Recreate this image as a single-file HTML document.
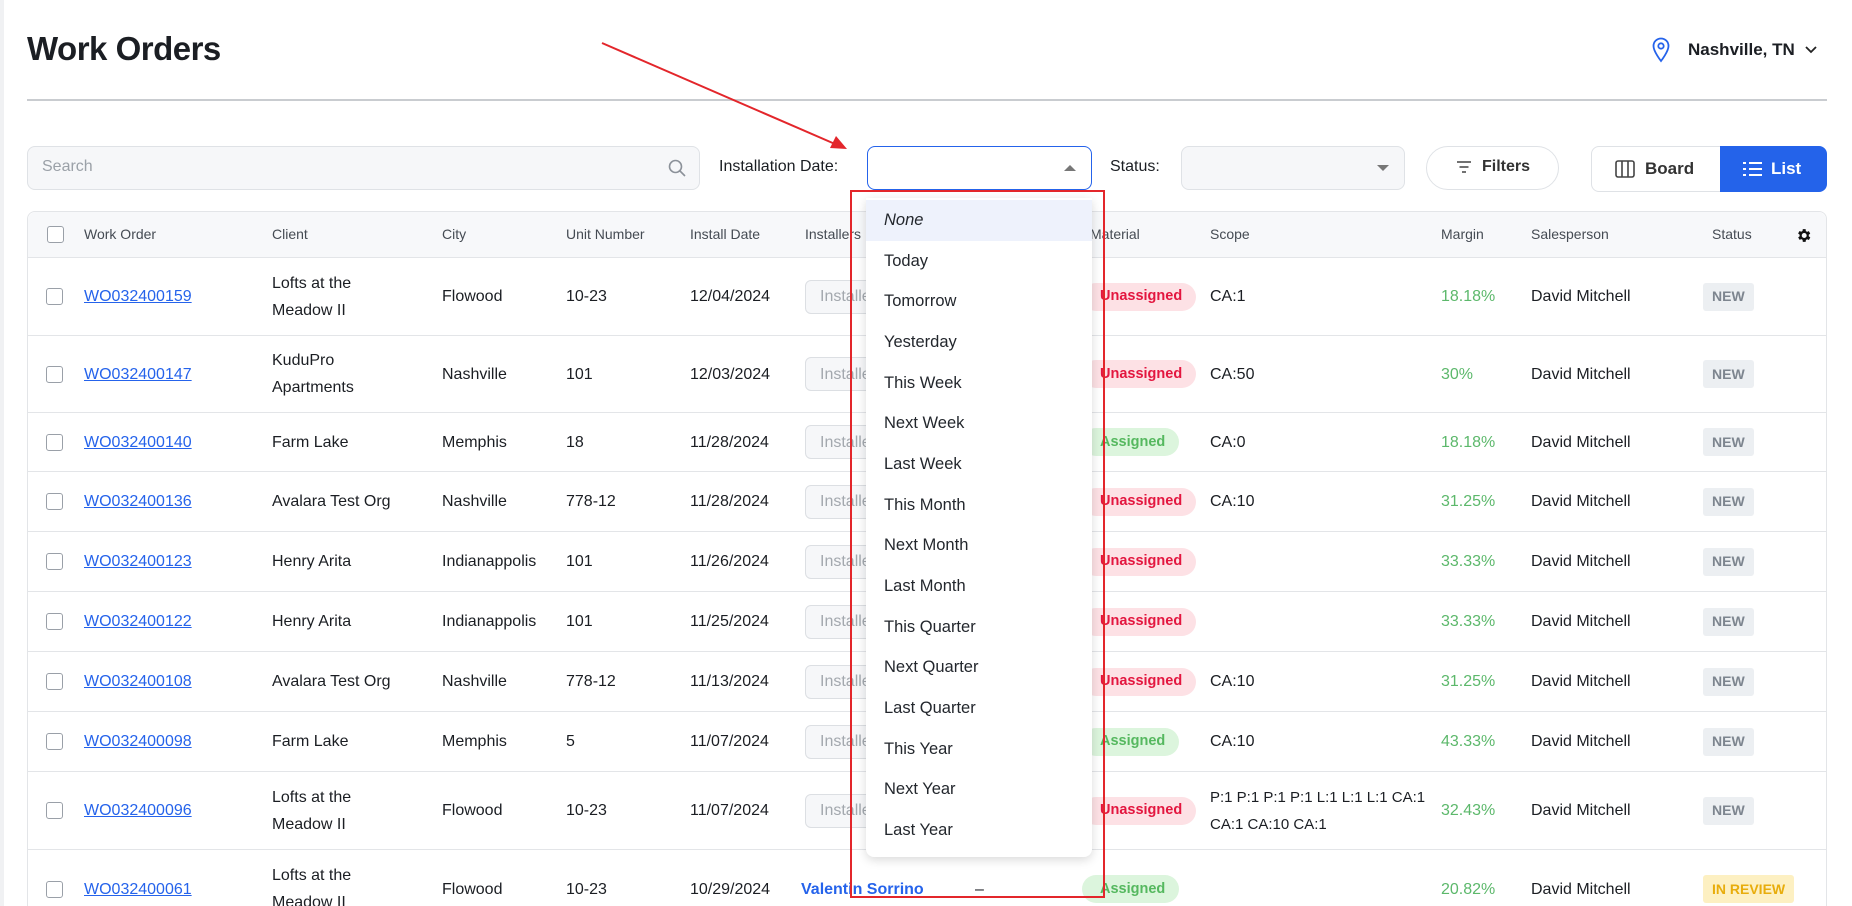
<!DOCTYPE html>
<html><head><meta charset="utf-8"><style>
*{box-sizing:border-box;margin:0;padding:0}
html,body{width:1852px;height:906px;overflow:hidden}
body{background:#fff;font-family:"Liberation Sans",sans-serif;color:#1b1e23;position:relative}
.a{position:absolute}
h1{position:absolute;left:27px;top:30px;font-size:33px;font-weight:700;letter-spacing:-0.5px}
.row{position:absolute;left:27px;width:1800px;border-bottom:1px solid #e3e5e8}
.c{position:absolute;top:0;height:100%;display:flex;align-items:center;font-size:16px;line-height:27px;white-space:nowrap}
.cb{width:17px;height:17px;border:1.5px solid #9aa0a8;border-radius:3px;background:#fff}
.lnk{color:#2563eb;text-decoration:underline}
.inp{width:130px;height:34px;border:1px solid #dcdfe3;border-radius:6px;background:#f6f7f9;color:#a3a8ae;padding-left:14px;display:flex;align-items:center;font-size:16px}
.bd{height:28px;border-radius:14px;padding:0 14px 0 18px;display:flex;align-items:center;font-size:14.5px;font-weight:700}
.un{background:#fde1e5;color:#e3163f}
.as{background:#dcf5dd;color:#55b85f}
.mg{color:#5cb86b}
.nw{background:#eceff2;color:#7d858f;font-size:14px;font-weight:700;height:28px;padding:0 9px;border-radius:3px;display:flex;align-items:center}
.hd{font-size:14px;color:#454b53}
.dd div{height:40.7px;display:flex;align-items:center;padding-left:18px;font-size:16.5px;color:#23272d}
</style></head><body>
<div class="a" style="left:0;top:0;width:4px;height:906px;background:#f0f1f3"></div>
<h1>Work Orders</h1>
<svg class="a" style="left:1652px;top:37px" width="18" height="26" viewBox="0 0 18 26"><path d="M9 1.5C4.8 1.5 1.5 4.8 1.5 9c0 5.5 7.5 15 7.5 15s7.5-9.5 7.5-15C16.5 4.8 13.2 1.5 9 1.5z" fill="none" stroke="#2563eb" stroke-width="1.8"/><circle cx="9" cy="9" r="2.7" fill="none" stroke="#2563eb" stroke-width="1.8"/></svg>
<div class="a" style="left:1688px;top:40px;font-size:17px;font-weight:700">Nashville, TN</div>
<svg class="a" style="left:1804px;top:45px" width="14" height="10" viewBox="0 0 14 10"><path d="M2 2l5 5 5-5" fill="none" stroke="#222" stroke-width="1.8"/></svg>
<div class="a" style="left:27px;top:99px;width:1800px;height:1.5px;background:#c9ccd0"></div>

<div class="a" style="left:27px;top:146px;width:673px;height:44px;border:1px solid #dfe2e6;border-radius:8px;background:#f6f7f9"></div>
<div class="a" style="left:42px;top:158px;font-size:16px;color:#9ba1a8">Search</div>
<svg class="a" style="left:667px;top:158px" width="20" height="20" viewBox="0 0 20 20"><circle cx="8.5" cy="8.5" r="6" fill="none" stroke="#8b9199" stroke-width="1.6"/><path d="M13 13l5 5" stroke="#8b9199" stroke-width="1.6"/></svg>
<div class="a" style="left:719px;top:158px;font-size:16px">Installation Date:</div>
<div class="a" style="left:867px;top:146px;width:225px;height:44px;border:1.5px solid #2563eb;border-radius:8px;background:#fff"></div>
<svg class="a" style="left:1064px;top:164px" width="12" height="8"><path d="M0 7L6 1L12 7z" fill="#777"/></svg>
<div class="a" style="left:1110px;top:158px;font-size:16px">Status:</div>
<div class="a" style="left:1181px;top:146px;width:224px;height:44px;border:1px solid #dfe2e6;border-radius:8px;background:#f6f7f9"></div>
<svg class="a" style="left:1377px;top:164px" width="12" height="8"><path d="M0 1L6 7L12 1z" fill="#777"/></svg>
<div class="a" style="left:1426px;top:146px;width:133px;height:44px;border:1px solid #dfe2e6;border-radius:22px;background:#fff"></div>
<svg class="a" style="left:1456px;top:160px" width="16" height="14"><path d="M1 2h14M3.5 7h9M6 12h4" stroke="#444" stroke-width="1.6"/></svg>
<div class="a" style="left:1482px;top:158px;font-size:16px;font-weight:700;color:#333">Filters</div>
<div class="a" style="left:1591px;top:146px;width:130px;height:46px;border:1px solid #dfe2e6;border-radius:8px 0 0 8px;background:#fff"></div>
<svg class="a" style="left:1615px;top:160px" width="20" height="18"><rect x="1" y="1" width="18" height="16" rx="2" fill="none" stroke="#444" stroke-width="1.6"/><path d="M7 1v16M13 1v16" stroke="#444" stroke-width="1.6"/></svg>
<div class="a" style="left:1645px;top:159px;font-size:17px;font-weight:700;color:#333">Board</div>
<div class="a" style="left:1720px;top:146px;width:107px;height:46px;border-radius:0 8px 8px 0;background:#2463ea"></div>
<svg class="a" style="left:1743px;top:161px" width="20" height="16"><g fill="#fff"><rect x="0" y="1" width="3" height="2"/><rect x="0" y="7" width="3" height="2"/><rect x="0" y="13" width="3" height="2"/><rect x="6" y="1" width="13" height="2"/><rect x="6" y="7" width="13" height="2"/><rect x="6" y="13" width="13" height="2"/></g></svg>
<div class="a" style="left:1771px;top:159px;font-size:17px;font-weight:700;color:#fff">List</div>

<div class="a" style="left:27px;top:211px;width:1800px;height:695px;border:1px solid #e3e5e8;border-bottom:none;border-radius:8px 8px 0 0"></div>
<div class="row" style="top:212px;height:46px;background:#f7f8fa;border-radius:8px 8px 0 0;left:28px;width:1798px">
<div class="c" style="left:19px"><div class="cb"></div></div>
<div class="c hd" style="left:56px">Work Order</div><div class="c hd" style="left:244px">Client</div><div class="c hd" style="left:414px">City</div><div class="c hd" style="left:538px">Unit Number</div><div class="c hd" style="left:662px">Install Date</div><div class="c hd" style="left:777px">Installers</div><div class="c hd" style="left:1062px">Material</div><div class="c hd" style="left:1182px">Scope</div><div class="c hd" style="left:1413px">Margin</div><div class="c hd" style="left:1503px">Salesperson</div><div class="c hd" style="left:1684px">Status</div>
<svg class="a" style="left:1767px;top:15px" width="17" height="17" viewBox="0 0 24 24"><path fill="#111" d="M19.4 13a7.5 7.5 0 000-2l2.1-1.6-2-3.5-2.5 1a7 7 0 00-1.7-1L15 3h-4l-.4 2.7a7 7 0 00-1.7 1l-2.5-1-2 3.5L6.6 11a7.5 7.5 0 000 2l-2.1 1.6 2 3.5 2.5-1a7 7 0 001.7 1L11 21h4l.4-2.7a7 7 0 001.7-1l2.5 1 2-3.5zM13 15.5a3.5 3.5 0 110-7 3.5 3.5 0 010 7z"/></svg>
</div>

<div id="rows"></div>
<script>
var R=[
[258,78,"WO032400159","Lofts at the<br>Meadow II","Flowood","10-23","12/04/2024","u","CA:1","18.18%","n"],
[336,77,"WO032400147","KuduPro<br>Apartments","Nashville","101","12/03/2024","u","CA:50","30%","n"],
[413,59,"WO032400140","Farm Lake","Memphis","18","11/28/2024","a","CA:0","18.18%","n"],
[472,60,"WO032400136","Avalara Test Org","Nashville","778-12","11/28/2024","u","CA:10","31.25%","n"],
[532,60,"WO032400123","Henry Arita","Indianappolis","101","11/26/2024","u","","33.33%","n"],
[592,60,"WO032400122","Henry Arita","Indianappolis","101","11/25/2024","u","","33.33%","n"],
[652,60,"WO032400108","Avalara Test Org","Nashville","778-12","11/13/2024","u","CA:10","31.25%","n"],
[712,60,"WO032400098","Farm Lake","Memphis","5","11/07/2024","a","CA:10","43.33%","n"],
[772,78,"WO032400096","Lofts at the<br>Meadow II","Flowood","10-23","11/07/2024","u","<span style='font-size:15px'>P:1 P:1 P:1 P:1 L:1 L:1 L:1 CA:1<br>CA:1 CA:10 CA:1</span>","32.43%","n"],
[850,78,"WO032400061","Lofts at the<br>Meadow II","Flowood","10-23","10/29/2024","a","","20.82%","r"]];
var h="";
R.forEach(function(r,i){
var inst=i==9?'<div class="c" style="left:774px;color:#2563eb;font-weight:700">Valentin Sorrino</div><div class="c" style="left:948px">–</div>':'<div class="c" style="left:778px"><div class="inp">Installers</div></div>';
var bd=r[7]=="u"?'<div class="bd un">Unassigned</div>':'<div class="bd as">Assigned</div>';
var st=r[10]=="n"?'<div class="nw">NEW</div>':'<div class="nw" style="background:#fdf0c2;color:#e8ad0c">IN REVIEW</div>';
h+='<div class="row" style="top:'+r[0]+'px;height:'+r[1]+'px;'+(i==9?'border-bottom:none':'')+'"><div class="c" style="left:19px"><div class="cb"></div></div><div class="c lnk" style="left:57px">'+r[2]+'</div><div class="c" style="left:245px">'+r[3]+'</div><div class="c" style="left:415px">'+r[4]+'</div><div class="c" style="left:539px">'+r[5]+'</div><div class="c" style="left:663px">'+r[6]+'</div>'+inst+'<div class="c" style="left:1055px">'+bd+'</div><div class="c" style="left:1183px">'+r[8]+'</div><div class="c mg" style="left:1414px">'+r[9]+'</div><div class="c" style="left:1504px">David Mitchell</div><div class="c" style="left:1676px">'+st+'</div></div>';
});
document.getElementById("rows").innerHTML=h;
</script>

<div class="a dd" style="left:866px;top:198px;width:226px;height:659px;background:#fff;border-radius:0 0 8px 8px;box-shadow:0 3px 10px rgba(0,0,0,0.15);padding-top:2px">
<div style="background:#eef2fc;font-style:italic">None</div><div>Today</div><div>Tomorrow</div><div>Yesterday</div><div>This Week</div><div>Next Week</div><div>Last Week</div><div>This Month</div><div>Next Month</div><div>Last Month</div><div>This Quarter</div><div>Next Quarter</div><div>Last Quarter</div><div>This Year</div><div>Next Year</div><div>Last Year</div>
</div>
<div class="a" style="left:850px;top:190px;width:255px;height:708px;border:2.5px solid #e3262b"></div>
<svg class="a" style="left:0;top:0" width="1852" height="906"><path d="M602 43L835 144" stroke="#e3262b" stroke-width="2"/><path d="M847 149L830 148L836 136z" fill="#e3262b"/></svg>
</body></html>
